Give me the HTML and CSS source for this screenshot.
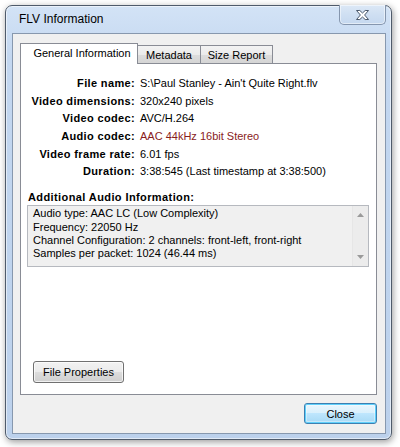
FILE: index.html
```html
<!DOCTYPE html>
<html>
<head>
<meta charset="utf-8">
<link rel="stylesheet" href="styles.css">
</head>
<body>
<div class="screen">
  <div class="window">
    <div class="titlebar">
      <span class="title">FLV Information</span>
      <div class="xbtn">
        <svg width="15" height="12" viewBox="0 0 15 12"><polygon points="1.5,1.5 4.8,1.5 7.5,4 10.2,1.5 13.5,1.5 9.6,6 13.5,10.5 10.2,10.5 7.5,8 4.8,10.5 1.5,10.5 5.4,6" fill="#ffffff" stroke="#4a586b" stroke-width="1" stroke-linejoin="round"/></svg>
      </div>
    </div>
    <div class="client">
      <div class="tabs">
        <div class="tab active">General Information</div>
        <div class="tab tab-meta">Metadata</div>
        <div class="tab tab-size">Size Report</div>
      </div>
      <div class="page">
        <div class="props">
          <span class="k">File name:</span><span class="v">S:\Paul Stanley - Ain't Quite Right.flv</span>
          <span class="k">Video dimensions:</span><span class="v">320x240 pixels</span>
          <span class="k">Video codec:</span><span class="v">AVC/H.264</span>
          <span class="k">Audio codec:</span><span class="v audio">AAC 44kHz 16bit Stereo</span>
          <span class="k">Video frame rate:</span><span class="v">6.01 fps</span>
          <span class="k">Duration:</span><span class="v">3:38:545 (Last timestamp at 3:38:500)</span>
        </div>
        <div class="sect">Additional Audio Information:</div>
        <div class="memo">
          <div class="memo-text">
            <div>Audio type: AAC LC (Low Complexity)</div>
            <div>Frequency: 22050 Hz</div>
            <div>Channel Configuration: 2 channels: front-left, front-right</div>
            <div>Samples per packet: 1024 (46.44 ms)</div>
          </div>
          <div class="vscroll">
            <svg width="7" height="4" viewBox="0 0 7 4"><polygon points="0,4 3.5,0 7,4" fill="#9a9a9a"/></svg>
            <svg width="7" height="4" viewBox="0 0 7 4"><polygon points="0,0 7,0 3.5,4" fill="#9a9a9a"/></svg>
          </div>
        </div>
        <div class="page-foot">
          <div class="btn btn-props">File Properties</div>
        </div>
      </div>
      <div class="foot">
        <div class="btn btn-default">Close</div>
      </div>
    </div>
  </div>
</div>
</body>
</html>
```
FILE: styles.css
```css
* { box-sizing: border-box; }
html, body { margin: 0; padding: 0; background: #ffffff; }
body {
  font-family: "Liberation Sans", Arial, sans-serif;
  font-size: 11px;
  color: #000;
}
.screen {
  width: 400px;
  height: 447px;
  padding: 5px 0 0 5px;
  overflow: hidden;
}
.window {
  width: 387px;
  height: 435px;
  border: 1px solid #4f5b6b;
  border-radius: 7px;
  background: linear-gradient(180deg, #d3e3f6 0%, #c3d7f0 12%, #bfd4ee 60%, #bcd1ec 100%);
  box-shadow: inset 0 0 0 1px rgba(255,255,255,0.55), 1px 2px 7px rgba(0,0,0,0.4);
  padding: 0 5px 5px 6px;
  display: flex;
  flex-direction: column;
}
.titlebar {
  height: 27px;
  display: flex;
  justify-content: space-between;
  align-items: flex-start;
  flex: none;
}
.title {
  font-size: 12px;
  padding: 6px 0 0 7px;
  color: #000;
  line-height: 14px;
}
.xbtn {
  width: 47px;
  height: 20px;
  margin-top: -1px;
  border: 1px solid #8596ae;
  border-top: none;
  border-radius: 0 0 5px 5px;
  background: linear-gradient(180deg, #dce8f6 0%, #cfdff2 50%, #c5d8ef 100%);
  box-shadow: inset 0 0 0 1px rgba(255,255,255,0.5);
  display: flex;
  align-items: center;
  justify-content: center;
  padding-top: 1px;
}
.client {
  width: 374px;
  height: 401px;
  border: 1px solid #8798ae;
  background: #f0f0f0;
  padding: 9px 8px 9px 7px;
  display: flex;
  flex-direction: column;
  flex: none;
}
.tabs {
  display: flex;
  height: 20px;
  align-items: flex-end;
  position: relative;
  z-index: 1;
  flex: none;
}
.tab {
  height: 18px;
  border: 1px solid #898c95;
  border-bottom: none;
  background: linear-gradient(180deg, #f3f3f3 0%, #ebebeb 50%, #dddddd 51%, #d5d5d5 100%);
  line-height: 17px;
  text-align: center;
  font-size: 11px;
}
.tab.active {
  width: 118px;
  height: 21px;
  margin-bottom: -1px;
  background: #ffffff;
  line-height: 18px;
  padding-left: 6px;
  padding-bottom: 2px;
}
.tab-meta { width: 63px; border-left: none; padding-top: 1px; }
.tab-size { width: 72px; border-left: none; padding-top: 1px; }
.page {
  height: 332px;
  border: 1px solid #898c95;
  background: #ffffff;
  padding-top: 10px;
  display: flex;
  flex-direction: column;
  flex: none;
}
.props {
  display: grid;
  grid-template-columns: 114px 1fr;
  grid-auto-rows: 17.7px;
  column-gap: 5px;
  align-items: center;
}
.k {
  font-weight: bold;
  text-align: right;
  line-height: 14px;
  letter-spacing: 0.35px;
  white-space: nowrap;
}
.v { line-height: 14px; white-space: nowrap; }
.v.audio { color: #8a1c1c; }
.sect {
  font-weight: bold;
  line-height: 14px;
  letter-spacing: 0.4px;
  margin: 10px 0 1px 7px;
}
.memo {
  margin-left: 6px;
  width: 342px;
  height: 62px;
  border: 1px solid #b6b9bf;
  background: #f0f0f0;
  display: flex;
}
.memo-text {
  flex: 1;
  padding: 1px 0 0 5px;
  line-height: 13.4px;
  white-space: nowrap;
}
.vscroll {
  width: 16px;
  border-left: 1px solid #e6e6e6;
  background: #ececec;
  display: flex;
  flex-direction: column;
  justify-content: space-between;
  align-items: center;
  padding: 7px 0 7px 0;
}
.page-foot {
  margin-top: auto;
  padding: 0 0 11px 12px;
}
.btn {
  border: 1px solid #707070;
  border-radius: 3px;
  background: linear-gradient(180deg, #f2f2f2 0%, #ebebeb 49%, #dddddd 50%, #cfcfcf 100%);
  box-shadow: inset 0 0 0 1px rgba(255,255,255,0.7);
  display: flex;
  align-items: center;
  justify-content: center;
  font-size: 11px;
}
.btn-props { width: 91px; height: 22px; }
.foot {
  margin-top: auto;
  display: flex;
  justify-content: flex-end;
}
.btn-default {
  width: 73px;
  height: 21px;
  border-color: #3c7fb1;
  background: linear-gradient(180deg, #eaf6fd 0%, #d9f0fc 49%, #bee6fd 50%, #a7d9f5 100%);
  box-shadow: inset 0 0 0 1px #5fd0fb, inset 0 0 0 2px rgba(255,255,255,0.35);
}
```
